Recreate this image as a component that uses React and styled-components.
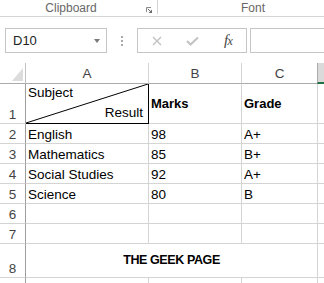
import React from "react";
import styled, { createGlobalStyle } from "styled-components";

const GlobalStyle = createGlobalStyle`
  html, body {
    margin: 0;
    padding: 0;
    background: #fff;
    overflow: hidden;
  }
  body {
    font-family: "Liberation Sans", Arial, sans-serif;
  }
`;

const Window = styled.div`
  width: 324px;
  height: 283px;
  overflow: hidden;
  background: #fff;
`;

/* ribbon strip with the group names */
const Ribbon = styled.div`
  display: flex;
  height: 16px;
  border-bottom: 1px solid #d5d5d5;
`;

const RibbonGroup = styled.div`
  display: flex;
  flex: none;
  width: ${(p) => p.$width}px;
`;

const GroupLabel = styled.span`
  width: ${(p) => p.$width}px;
  text-align: center;
  font-size: 12px;
  line-height: 16px;
  color: #666;
`;

const Launcher = styled.svg`
  margin: 7px 0 0 4px;
  flex: none;
`;

const GroupDivider = styled.div`
  width: 1px;
  height: 14px;
  background: #d5d5d5;
  flex: none;
`;

/* name box + formula bar */
const FormulaBar = styled.div`
  display: flex;
  height: 25px;
  margin-top: 11px;
  padding-left: 5px;
`;

const NameBox = styled.div`
  box-sizing: border-box;
  width: 102px;
  flex: none;
  display: flex;
  align-items: center;
  padding: 0 6px 0 7px;
  border: 1px solid #c6c6c6;
  font-size: 13px;
  color: #222;
`;

const DropArrow = styled.span`
  margin-left: auto;
  width: 0;
  height: 0;
  border-left: 3.5px solid transparent;
  border-right: 3.5px solid transparent;
  border-top: 4px solid #7a7a7a;
`;

const Grip = styled.div`
  width: 30px;
  flex: none;
  display: flex;
  flex-direction: column;
  align-items: center;
  justify-content: center;
  gap: 2px;
  span {
    width: 2px;
    height: 2px;
    background: #a8a8a8;
  }
`;

const FxButtons = styled.div`
  box-sizing: border-box;
  width: 110px;
  flex: none;
  display: flex;
  padding-left: 1px;
  border: 1px solid #c6c6c6;
`;

const FxSlot = styled.div`
  width: 36px;
  display: flex;
  align-items: center;
  justify-content: center;
`;

const FxGlyph = styled.span`
  font-family: "Liberation Serif", "Times New Roman", serif;
  font-style: italic;
  font-size: 15px;
  color: #444;
  letter-spacing: -0.5px;
  small {
    font-size: 12px;
  }
`;

const FormulaInput = styled.div`
  box-sizing: border-box;
  width: 120px;
  flex: none;
  margin-left: 3px;
  border: 1px solid #c6c6c6;
`;

/* worksheet */
const Sheet = styled.div`
  display: grid;
  grid-template-columns: 26px 123px 93px 76px 64px;
  grid-template-rows: 21px 40px repeat(6, 20px) 34px 20px;
  margin-top: 10px;
  font-size: 13.5px;
  line-height: 17px;
`;

const Cell = styled.div`
  box-sizing: border-box;
  display: flex;
  align-items: ${(p) => (p.$center ? "center" : "flex-end")};
  justify-content: ${(p) => (p.$span ? "center" : "flex-start")};
  grid-column: ${(p) => (p.$span ? `span ${p.$span}` : "auto")};
  padding: 0 2px;
  border-right: 1px solid #d4d4d4;
  border-bottom: 1px solid #d4d4d4;
  color: #000;
  white-space: nowrap;
  overflow: hidden;
  font-weight: ${(p) => (p.$bold ? 700 : 400)};
  font-size: ${(p) => (p.$bold ? p.$size || 13 : 13.5)}px;
  letter-spacing: ${(p) => p.$spacing || 0}px;
`;

const ColHead = styled.div`
  box-sizing: border-box;
  display: flex;
  align-items: center;
  justify-content: center;
  border-right: 1px solid ${(p) => (p.$corner ? "#c0c0c0" : "#d4d4d4")};
  border-bottom: ${(p) =>
    p.$selected ? "2px solid #217346" : "1px solid #ababab"};
  border-left: ${(p) => (p.$selected ? "1px solid #ababab" : "none")};
  margin-left: ${(p) => (p.$selected ? "-1px" : "0")};
  background: ${(p) => (p.$selected ? "#dadada" : "#fff")};
  color: #444;
  ${(p) =>
    p.$corner &&
    `
    align-items: flex-end;
    justify-content: flex-end;
    padding: 0 2px 2px 0;
  `}
`;

const CornerMark = styled.span`
  width: 11px;
  height: 13px;
  background: #dcdcdc;
  clip-path: polygon(100% 0, 100% 100%, 0 100%);
`;

const RowHead = styled.div`
  box-sizing: border-box;
  display: flex;
  align-items: flex-end;
  justify-content: center;
  border-right: 1px solid #9e9e9e;
  border-bottom: 1px solid #d4d4d4;
  color: #444;
`;

const SplitCell = styled.div`
  position: relative;
  box-sizing: border-box;
  display: flex;
  flex-direction: column;
  justify-content: space-between;
  padding: 0 5px 2px 2px;
  border-right: 1px solid #000;
  border-bottom: 1px solid #000;
  white-space: nowrap;
  span:last-child {
    text-align: right;
  }
`;

const Diagonal = styled.svg`
  position: absolute;
  left: 0;
  top: 0;
  width: 100%;
  height: 100%;
  pointer-events: none;
`;

const marks = [
  { n: 2, subject: "English", mark: "98", grade: "A+" },
  { n: 3, subject: "Mathematics", mark: "85", grade: "B+" },
  { n: 4, subject: "Social Studies", mark: "92", grade: "A+" },
  { n: 5, subject: "Science", mark: "80", grade: "B" },
  { n: 6 },
  { n: 7 },
];

export default function App() {
  return (
    <Window>
      <GlobalStyle />
      <Ribbon>
        <RibbonGroup $width={157}>
          <GroupLabel $width={142}>Clipboard</GroupLabel>
          <Launcher width="6" height="6" viewBox="0 0 6 6">
            <path d="M0.5 5 V0.5 H5" stroke="#8a8a8a" fill="none" />
            <path d="M1.8 1.8 L4.5 4.5" stroke="#6a6a6a" />
            <path d="M6 2.5 V6 H2.5 Z" fill="#6a6a6a" />
          </Launcher>
        </RibbonGroup>
        <GroupDivider />
        <RibbonGroup $width={190}>
          <GroupLabel $width={190}>Font</GroupLabel>
        </RibbonGroup>
      </Ribbon>

      <FormulaBar>
        <NameBox>
          D10
          <DropArrow />
        </NameBox>
        <Grip>
          <span />
          <span />
          <span />
        </Grip>
        <FxButtons>
          <FxSlot>
            <svg width="10" height="10" viewBox="0 0 10 10">
              <path
                d="M1 1 L9 9 M9 1 L1 9"
                stroke="#c2c2c2"
                strokeWidth="1.4"
              />
            </svg>
          </FxSlot>
          <FxSlot>
            <svg width="13" height="10" viewBox="0 0 13 10">
              <path
                d="M1 5 L4.5 8.5 L12 1.5"
                stroke="#c2c2c2"
                strokeWidth="2"
                fill="none"
              />
            </svg>
          </FxSlot>
          <FxSlot>
            <FxGlyph>
              f<small>x</small>
            </FxGlyph>
          </FxSlot>
        </FxButtons>
        <FormulaInput />
      </FormulaBar>

      <Sheet>
        <ColHead $corner>
          <CornerMark />
        </ColHead>
        <ColHead>A</ColHead>
        <ColHead>B</ColHead>
        <ColHead>C</ColHead>
        <ColHead $selected />

        <RowHead>1</RowHead>
        <SplitCell>
          <Diagonal viewBox="0 0 122 39" preserveAspectRatio="none">
            <line x1="0" y1="39" x2="122" y2="0" stroke="#000" strokeWidth="1" />
          </Diagonal>
          <span>Subject</span>
          <span>Result</span>
        </SplitCell>
        <Cell $bold $center>
          Marks
        </Cell>
        <Cell $bold $center>
          Grade
        </Cell>
        <Cell />

        {marks.map((r) => (
          <React.Fragment key={r.n}>
            <RowHead>{r.n}</RowHead>
            <Cell>{r.subject}</Cell>
            <Cell>{r.mark}</Cell>
            <Cell>{r.grade}</Cell>
            <Cell />
          </React.Fragment>
        ))}

        <RowHead>8</RowHead>
        <Cell $span={3} $center $bold $size={12.5} $spacing={-0.4}>
          THE GEEK PAGE
        </Cell>
        <Cell />

        <RowHead />
        <Cell />
        <Cell />
        <Cell />
        <Cell />
      </Sheet>
    </Window>
  );
}
